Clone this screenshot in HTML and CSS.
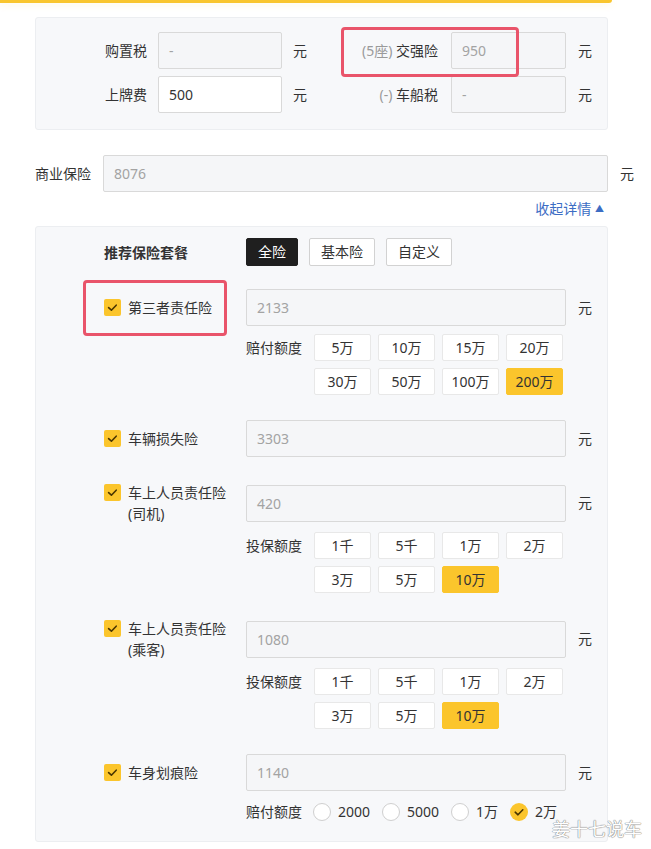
FILE: index.html
```html
<!DOCTYPE html>
<html lang="zh-CN">
<head>
<meta charset="utf-8">
<title>保险费用</title>
<link rel="stylesheet" href="styles.css">
</head>
<body>
<div class="topbar"></div>
<div class="page">
  <div class="panel fees">
    <div class="fee-grid">
      <span class="lbl">购置税</span>
      <div class="field dis">-</div>
      <span class="unit-a">元</span>
      <span class="lbl lbl-r"><span class="muted">(5座)</span> 交强险</span>
      <div class="field dis">950</div>
      <span class="unit-b">元</span>

      <span class="lbl">上牌费</span>
      <div class="field">500</div>
      <span class="unit-a">元</span>
      <span class="lbl lbl-r"><span class="muted">(-)</span> 车船税</span>
      <div class="field dis">-</div>
      <span class="unit-b">元</span>
    </div>
    <div class="mark mark-jq"></div>
  </div>

  <div class="biz">
    <span class="biz-lbl">商业保险</span>
    <div class="field dis">8076</div>
    <span class="unit-b">元</span>
  </div>

  <div class="toggle">收起详情 <span class="tri">▲</span></div>

  <div class="panel pkg">
    <div class="pkg-head">
      <span class="pkg-title">推荐保险套餐</span>
      <div class="pkg-btns">
        <span class="pkg-btn on">全险</span>
        <span class="pkg-btn">基本险</span>
        <span class="pkg-btn">自定义</span>
      </div>
    </div>

    <div class="item first">
      <div class="item-main">
        <div class="chk-label"><span class="chk"><svg viewBox="0 0 17 17" width="17" height="17"><polyline points="4.6,8.6 7.4,11.2 12.2,6.2" fill="none" stroke="#4a3500" stroke-width="1.6" stroke-linecap="round" stroke-linejoin="round"/></svg></span><span class="name">第三者责任险</span></div>
        <div class="field dis">2133</div>
        <span class="unit-b">元</span>
      </div>
      <div class="opts">
        <span class="opts-label">赔付额度</span>
        <div class="opt-grid">
          <span class="opt">5万</span><span class="opt">10万</span><span class="opt">15万</span><span class="opt">20万</span>
          <span class="opt">30万</span><span class="opt">50万</span><span class="opt">100万</span><span class="opt on">200万</span>
        </div>
      </div>
      <div class="mark mark-third"></div>
    </div>

    <div class="item">
      <div class="item-main">
        <div class="chk-label"><span class="chk"><svg viewBox="0 0 17 17" width="17" height="17"><polyline points="4.6,8.6 7.4,11.2 12.2,6.2" fill="none" stroke="#4a3500" stroke-width="1.6" stroke-linecap="round" stroke-linejoin="round"/></svg></span><span class="name">车辆损失险</span></div>
        <div class="field dis">3303</div>
        <span class="unit-b">元</span>
      </div>
    </div>

    <div class="item">
      <div class="item-main">
        <div class="chk-label"><span class="chk"><svg viewBox="0 0 17 17" width="17" height="17"><polyline points="4.6,8.6 7.4,11.2 12.2,6.2" fill="none" stroke="#4a3500" stroke-width="1.6" stroke-linecap="round" stroke-linejoin="round"/></svg></span><span class="name">车上人员责任险<br>(司机)</span></div>
        <div class="field dis">420</div>
        <span class="unit-b">元</span>
      </div>
      <div class="opts">
        <span class="opts-label">投保额度</span>
        <div class="opt-grid">
          <span class="opt">1千</span><span class="opt">5千</span><span class="opt">1万</span><span class="opt">2万</span>
          <span class="opt">3万</span><span class="opt">5万</span><span class="opt on">10万</span>
        </div>
      </div>
    </div>

    <div class="item">
      <div class="item-main">
        <div class="chk-label"><span class="chk"><svg viewBox="0 0 17 17" width="17" height="17"><polyline points="4.6,8.6 7.4,11.2 12.2,6.2" fill="none" stroke="#4a3500" stroke-width="1.6" stroke-linecap="round" stroke-linejoin="round"/></svg></span><span class="name">车上人员责任险<br>(乘客)</span></div>
        <div class="field dis">1080</div>
        <span class="unit-b">元</span>
      </div>
      <div class="opts">
        <span class="opts-label">投保额度</span>
        <div class="opt-grid">
          <span class="opt">1千</span><span class="opt">5千</span><span class="opt">1万</span><span class="opt">2万</span>
          <span class="opt">3万</span><span class="opt">5万</span><span class="opt on">10万</span>
        </div>
      </div>
    </div>

    <div class="item">
      <div class="item-main">
        <div class="chk-label"><span class="chk"><svg viewBox="0 0 17 17" width="17" height="17"><polyline points="4.6,8.6 7.4,11.2 12.2,6.2" fill="none" stroke="#4a3500" stroke-width="1.6" stroke-linecap="round" stroke-linejoin="round"/></svg></span><span class="name">车身划痕险</span></div>
        <div class="field dis">1140</div>
        <span class="unit-b">元</span>
      </div>
      <div class="radios">
        <span class="radios-label">赔付额度</span>
        <span class="radio"><span class="dot"></span>2000</span>
        <span class="radio"><span class="dot"></span>5000</span>
        <span class="radio"><span class="dot"></span>1万</span>
        <span class="radio"><span class="dot on"><svg viewBox="0 0 18 18" width="18" height="18"><polyline points="5.2,9.2 8,11.8 12.8,6.8" fill="none" stroke="#4a3500" stroke-width="1.6" stroke-linecap="round" stroke-linejoin="round"/></svg></span>2万</span>
      </div>
    </div>
  </div>
</div>
<div class="watermark">姜十七说车</div>
</body>
</html>
```
FILE: styles.css
```css
html, body {
  margin: 0;
  padding: 0;
  background: #ffffff;
}
body {
  font-family: "Noto Sans", "Noto Sans CJK SC", sans-serif;
  font-size: 14px;
  color: #333333;
  position: relative;
  min-height: 849px;
}
.topbar {
  width: 612px;
  height: 3px;
  background: #f9c52d;
  border-radius: 0 0 3px 0;
  box-shadow: 0 2px 7px rgba(249, 197, 45, 0.18);
}
.page {
  width: 573px;
  padding: 14px 0 0 35px;
}
.panel {
  background: #f7f8fa;
  border: 1px solid #eceef1;
  border-radius: 3px;
  box-sizing: border-box;
}
.fees {
  position: relative;
  padding: 14px 0 16px;
}
.fee-grid {
  display: grid;
  grid-template-columns: 122px 124px 25px 144px 115px auto;
  row-gap: 7px;
  align-items: center;
}
.lbl {
  text-align: right;
  padding-right: 11px;
  line-height: 20px;
}
.lbl-r {
  padding-right: 13px;
}
.muted {
  color: #9a9a9a;
}
.field {
  height: 37px;
  box-sizing: border-box;
  border: 1px solid #d9d9d9;
  border-radius: 2px;
  background: #ffffff;
  padding: 0 10px;
  line-height: 35px;
  color: #333333;
  white-space: nowrap;
  overflow: hidden;
}
.field.dis {
  background: #f5f6f8;
  color: #a3a3a3;
}
.unit-a {
  padding-left: 11px;
  line-height: 20px;
}
.unit-b {
  padding-left: 12px;
  line-height: 20px;
}
.biz {
  display: grid;
  grid-template-columns: 68px 505px auto;
  align-items: center;
  margin-top: 25px;
}
.biz-lbl {
  line-height: 20px;
}
.toggle {
  height: 34px;
  line-height: 34px;
  text-align: right;
  padding-right: 4px;
  color: #3c6dc4;
  font-size: 14px;
}
.tri {
  font-size: 9px;
  vertical-align: 2px;
}
.pkg {
  position: relative;
  padding: 11px 0 16px 68px;
}
.pkg-head {
  display: flex;
  align-items: center;
  height: 28px;
}
.pkg-title {
  width: 142px;
  font-weight: bold;
}
.pkg-btns {
  display: flex;
  gap: 11px;
}
.pkg-btn {
  height: 28px;
  line-height: 26px;
  box-sizing: border-box;
  border: 1px solid #d2d2d2;
  background: #ffffff;
  border-radius: 2px;
  text-align: center;
  width: 66px;
}
.pkg-btn.on {
  width: 52px;
  background: #1f1f1f;
  border-color: #1f1f1f;
  color: #ffffff;
}
.item {
  position: relative;
  margin-top: 25px;
}
.item.first {
  margin-top: 23px;
}
.item-main {
  display: grid;
  grid-template-columns: 142px 320px auto;
  align-items: center;
}
.chk-label {
  display: flex;
  align-items: flex-start;
  gap: 7px;
}
.chk {
  width: 17px;
  height: 17px;
  flex: none;
  margin-top: 2px;
  background: #fbc52c;
  border-radius: 2px;
  display: block;
}
.chk svg {
  display: block;
}
.name {
  line-height: 21px;
}
.opts {
  display: flex;
  margin: 8px 0 0 142px;
}
.opts-label {
  width: 68px;
  line-height: 27px;
}
.opt-grid {
  display: grid;
  grid-template-columns: repeat(4, 57px);
  gap: 7px 7px;
}
.opt {
  height: 27px;
  line-height: 25px;
  box-sizing: border-box;
  border: 1px solid #e8e8e8;
  background: #ffffff;
  border-radius: 2px;
  text-align: center;
}
.opt.on {
  background: #fbc52c;
  border-color: #fbc52c;
}
.radios {
  display: flex;
  align-items: center;
  height: 26px;
  margin: 8px 0 0 142px;
  line-height: 18px;
}
.radios-label {
  width: 67px;
}
.radio {
  display: flex;
  align-items: center;
  gap: 7px;
  margin-right: 12px;
}
.dot {
  width: 18px;
  height: 18px;
  box-sizing: border-box;
  border: 1px solid #cfcfcf;
  border-radius: 50%;
  background: #ffffff;
  display: block;
}
.dot.on {
  border: none;
  background: #fbc52c;
}
.dot svg {
  display: block;
}
.mark {
  position: absolute;
  border: 3px solid #e9546a;
  border-radius: 4px;
  box-sizing: border-box;
  pointer-events: none;
}
.mark-jq {
  left: 305px;
  top: 9px;
  width: 178px;
  height: 50px;
}
.mark-third {
  left: -21px;
  top: -9px;
  width: 144px;
  height: 56px;
}
.watermark {
  position: absolute;
  left: 552px;
  top: 819px;
  font-size: 18px;
  line-height: 18px;
  color: #ffffff;
  font-family: "Noto Sans CJK SC", sans-serif;
  text-shadow: 0 0 1px #8a8a8a, 0 0 1px #8a8a8a, 0 0 1px #8a8a8a;
}
```
